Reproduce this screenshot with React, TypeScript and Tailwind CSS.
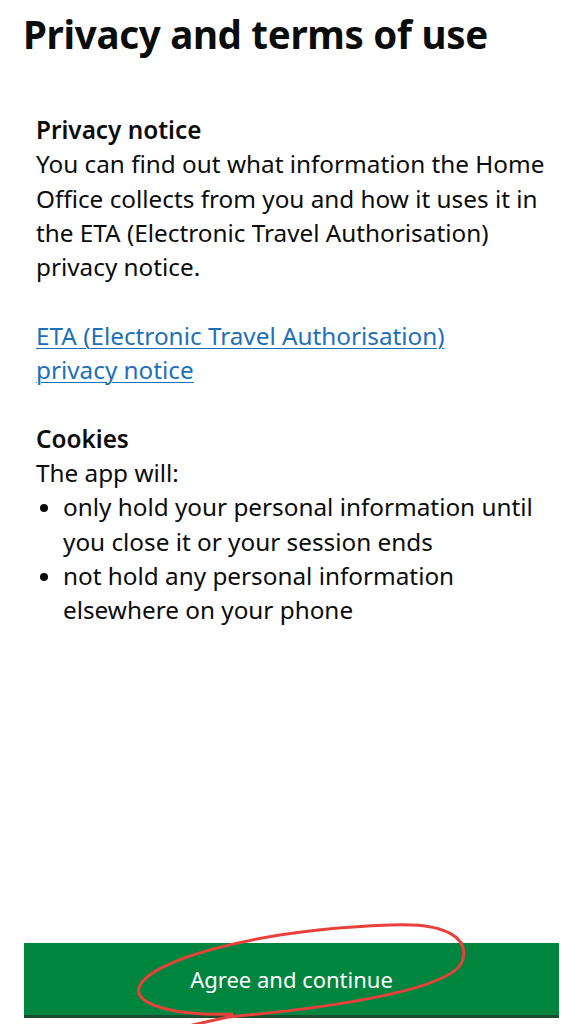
import React from "react";

export default function App() {
  return (
    <div
      className="relative w-[583px] h-[1024px] bg-white flex flex-col overflow-hidden text-[#0b0c0c]"
      style={{ fontFamily: '"Noto Sans", "Open Sans", sans-serif' }}
    >
      <h1 className="pl-[23px] pt-[8px] text-[38.5px] leading-[52px] font-bold tracking-[-0.3px]">
        Privacy and terms of use
      </h1>
      <div className="pl-[36px] pt-[53px] text-[24.3px] leading-[34.3px]">
        <h2 className="font-semibold">Privacy notice</h2>
        <p>
          You can find out what information the Home
          <br />
          Office collects from you and how it uses it in
          <br />
          the ETA (Electronic Travel Authorisation)
          <br />
          privacy notice.
        </p>
        <p className="mt-[34.3px]">
          <a href="#" className="text-[#1d70b8] underline underline-offset-[3px] decoration-1">
            ETA (Electronic Travel Authorisation)
            <br />
            privacy notice
          </a>
        </p>
        <h2 className="mt-[34.3px] font-semibold">Cookies</h2>
        <p>The app will:</p>
        <ul>
          <li className="flex">
            <span className="w-[27px] shrink-0 pl-[4px] pt-[14px]">
              <span className="block w-[8px] h-[8px] rounded-full bg-[#0b0c0c]" />
            </span>
            <span>
              only hold your personal information until
              <br />
              you close it or your session ends
            </span>
          </li>
          <li className="flex">
            <span className="w-[27px] shrink-0 pl-[4px] pt-[14px]">
              <span className="block w-[8px] h-[8px] rounded-full bg-[#0b0c0c]" />
            </span>
            <span>
              not hold any personal information
              <br />
              elsewhere on your phone
            </span>
          </li>
        </ul>
      </div>
      <div className="flex-1" />
      <div className="px-[24px] pb-[6px]">
        <button className="w-full h-[75px] bg-[#00853f] border-b-[3px] border-[#1a4d2e] text-white text-[22px] flex items-center justify-center">
          Agree and continue
        </button>
      </div>
      <svg
        className="absolute left-0 top-[900px] pointer-events-none"
        width="583"
        height="124"
        viewBox="0 0 583 124"
      >
        <path
          d="M 232 114 C 180 116, 134 106, 139 88 C 146 62, 250 30, 390 25 C 450 22, 470 40, 462 62 C 450 90, 330 108, 228 117 L 188 126"
          fill="none"
          stroke="#e8413b"
          strokeWidth="3"
          strokeLinecap="round"
        />
      </svg>
    </div>
  );
}
